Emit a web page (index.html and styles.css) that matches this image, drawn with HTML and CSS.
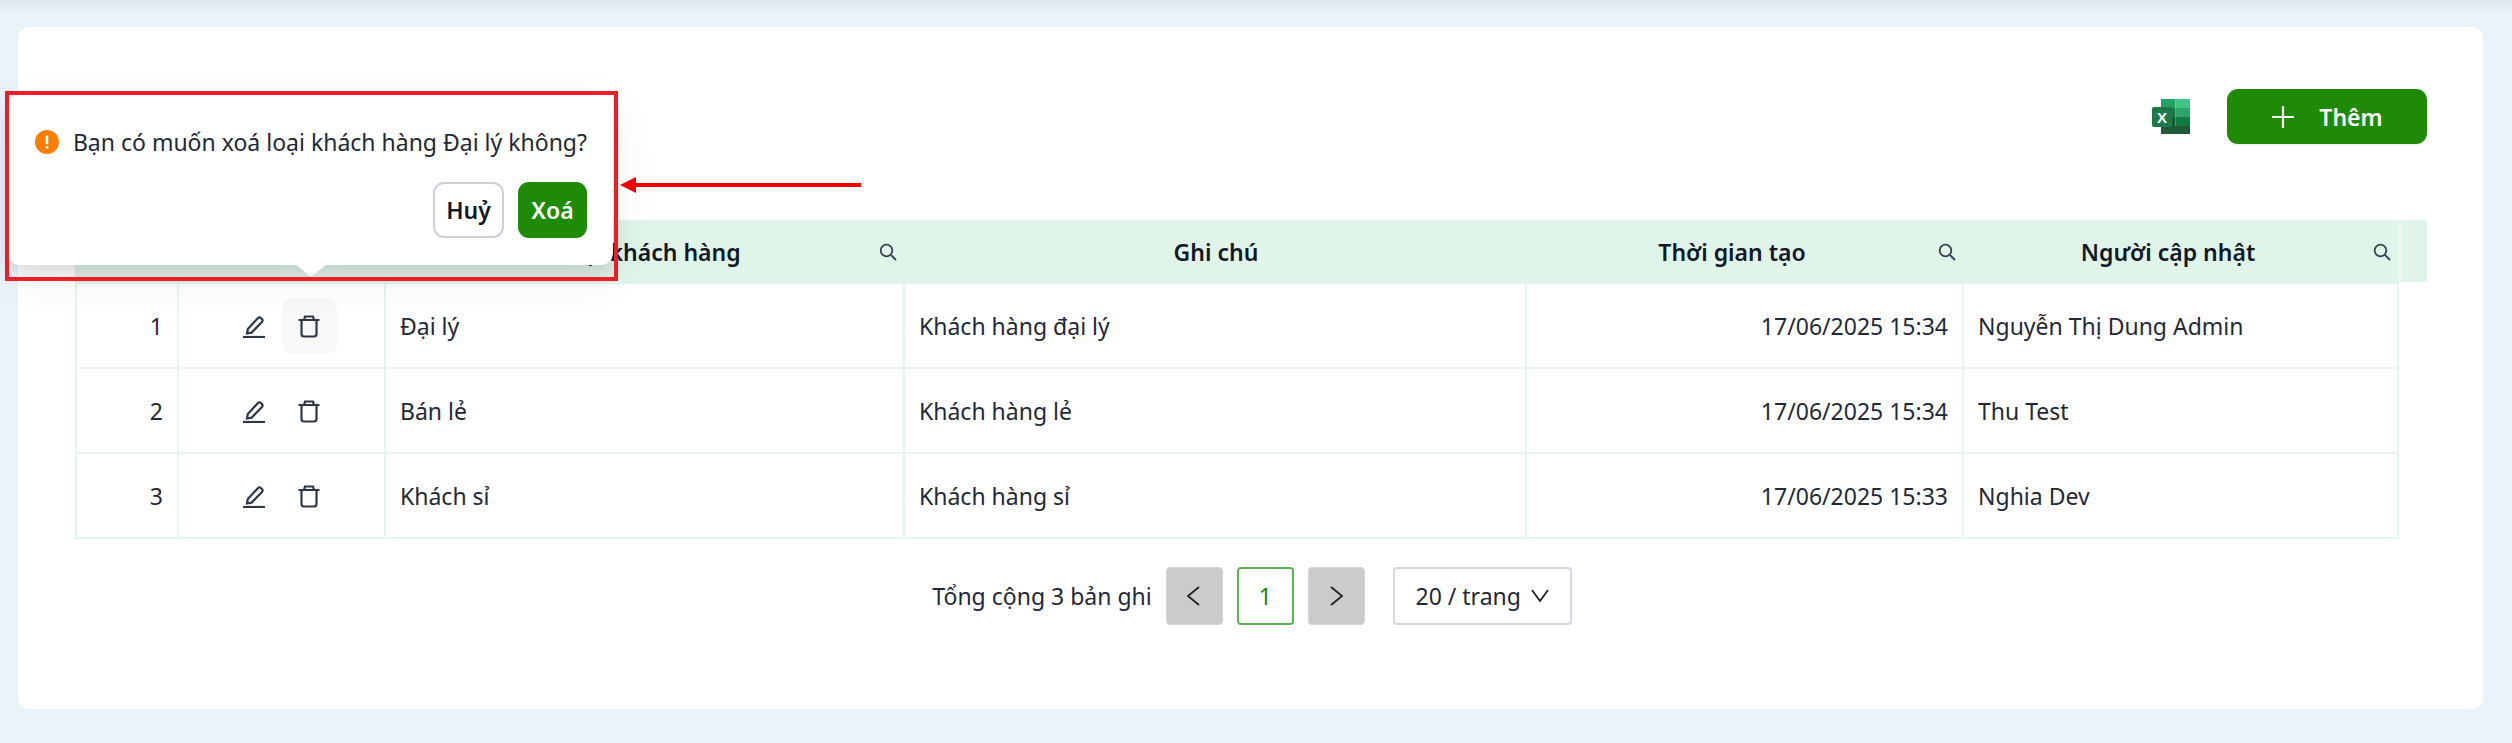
FILE: index.html
```html
<!DOCTYPE html>
<html lang="vi">
<head>
<meta charset="utf-8">
<title>Loại khách hàng</title>
<link rel="stylesheet" href="styles.css">
</head>
<body>
<div class="card">
  <div class="toolbar">
    <h1 class="title">Loại khách hàng</h1>
    <div class="actions">
      <svg class="excel" viewBox="0 0 38 35" width="38" height="35">
        <rect x="9" y="0" width="14.500" height="9" fill="#21a366"/>
        <rect x="23.500" y="0" width="14.500" height="9" fill="#3fc486"/>
        <rect x="9" y="9" width="14.500" height="9" fill="#107c41"/>
        <rect x="23.500" y="9" width="14.500" height="9" fill="#2fa36c"/>
        <rect x="9" y="18" width="14.500" height="9" fill="#185c37"/>
        <rect x="23.500" y="18" width="14.500" height="9" fill="#107c41"/>
        <rect x="9" y="27" width="29" height="8" fill="#1f5a3a"/>
        <rect x="0" y="8" width="20" height="20" rx="2" fill="#1d7a48"/>
        <text class="excel-x" x="10" y="23.500" text-anchor="middle">X</text>
      </svg>
      <button class="btn btn-add">
        <svg viewBox="0 0 24 24" width="24" height="24"><path d="M12 1v22M1 12h22" stroke="#fff" stroke-width="2.200" fill="none"/></svg>
        <span>Thêm</span>
      </button>
    </div>
  </div>

  <div class="table">
    <div class="row head">
      <div class="cell c-stt"></div>
      <div class="cell c-act"></div>
      <div class="cell c-name"><span class="th">Tên loại khách hàng</span><svg class="search" viewBox="0 0 20 20"><circle cx="8.500" cy="8.500" r="5.800"/><path d="M13 13l5 5"/></svg></div>
      <div class="cell c-note"><span class="th">Ghi chú</span></div>
      <div class="cell c-time"><span class="th">Thời gian tạo</span><svg class="search" viewBox="0 0 20 20"><circle cx="8.500" cy="8.500" r="5.800"/><path d="M13 13l5 5"/></svg></div>
      <div class="cell c-user"><span class="th">Người cập nhật</span><svg class="search" viewBox="0 0 20 20"><circle cx="8.500" cy="8.500" r="5.800"/><path d="M13 13l5 5"/></svg></div>
      <div class="cell c-scroll"></div>
    </div>

    <div class="row body">
      <div class="cell c-stt num">1</div>
      <div class="cell c-act">
        <span class="icon-btn"><svg viewBox="0 0 24 24"><path d="M5 19.500l.8-4.500L16 4a2 2 0 0 1 2.900 0l1.100 1.100a2 2 0 0 1 0 2.900L9.500 18.700z"/><path d="M1 23h22"/></svg></span>
        <span class="icon-btn active"><svg viewBox="0 0 24 24"><path d="M1.500 6h21M7 6l1-3.500h8L17 6M4.500 6v14a2.500 2.500 0 0 0 2.500 2.500h10a2.500 2.500 0 0 0 2.500-2.500V6"/></svg></span>
      </div>
      <div class="cell c-name">Đại lý</div>
      <div class="cell c-note">Khách hàng đại lý</div>
      <div class="cell c-time right">17/06/2025 15:34</div>
      <div class="cell c-user">Nguyễn Thị Dung Admin</div>
    </div>
    <div class="row body">
      <div class="cell c-stt num">2</div>
      <div class="cell c-act">
        <span class="icon-btn"><svg viewBox="0 0 24 24"><path d="M5 19.500l.8-4.500L16 4a2 2 0 0 1 2.900 0l1.100 1.100a2 2 0 0 1 0 2.900L9.500 18.700z"/><path d="M1 23h22"/></svg></span>
        <span class="icon-btn"><svg viewBox="0 0 24 24"><path d="M1.500 6h21M7 6l1-3.500h8L17 6M4.500 6v14a2.500 2.500 0 0 0 2.500 2.500h10a2.500 2.500 0 0 0 2.500-2.500V6"/></svg></span>
      </div>
      <div class="cell c-name">Bán lẻ</div>
      <div class="cell c-note">Khách hàng lẻ</div>
      <div class="cell c-time right">17/06/2025 15:34</div>
      <div class="cell c-user">Thu Test</div>
    </div>
    <div class="row body">
      <div class="cell c-stt num">3</div>
      <div class="cell c-act">
        <span class="icon-btn"><svg viewBox="0 0 24 24"><path d="M5 19.500l.8-4.500L16 4a2 2 0 0 1 2.900 0l1.100 1.100a2 2 0 0 1 0 2.900L9.500 18.700z"/><path d="M1 23h22"/></svg></span>
        <span class="icon-btn"><svg viewBox="0 0 24 24"><path d="M1.500 6h21M7 6l1-3.500h8L17 6M4.500 6v14a2.500 2.500 0 0 0 2.500 2.500h10a2.500 2.500 0 0 0 2.500-2.500V6"/></svg></span>
      </div>
      <div class="cell c-name">Khách sỉ</div>
      <div class="cell c-note">Khách hàng sỉ</div>
      <div class="cell c-time right">17/06/2025 15:33</div>
      <div class="cell c-user">Nghia Dev</div>
    </div>
  </div>

  <div class="pager">
    <span class="total">Tổng cộng 3 bản ghi</span>
    <span class="page nav"><svg viewBox="0 0 20 20" width="20" height="20"><path d="M15 1L4 10l11 9"/></svg></span>
    <span class="page current">1</span>
    <span class="page nav"><svg viewBox="0 0 20 20" width="20" height="20"><path d="M5 1l11 9-11 9"/></svg></span>
    <span class="size">20 / trang <svg viewBox="0 0 18 18" width="18" height="18"><path d="M1 3l8 11 8-11"/></svg></span>
  </div>
</div>

<div class="popup">
  <div class="pop-msg">
    <svg class="warn" viewBox="0 0 24 24" width="24" height="24"><circle cx="12" cy="12" r="12" fill="#fa7d00"/><rect x="10.700" y="5.500" width="2.600" height="9" rx="1.200" fill="#fff"/><circle cx="12" cy="17.500" r="1.500" fill="#fff"/></svg>
    <span>Bạn có muốn xoá loại khách hàng Đại lý không?</span>
  </div>
  <div class="pop-actions">
    <button class="btn btn-cancel">Huỷ</button>
    <button class="btn btn-ok">Xoá</button>
  </div>
  <span class="pop-tip"></span>
</div>
<div class="redbox"></div>
<svg class="arrow" viewBox="0 0 244 20" width="244" height="20"><path d="M241 10H14" stroke="#f40000" stroke-width="4"/><path d="M0 10l16-8v16z" fill="#f40000"/></svg>
</body>
</html>
```
FILE: styles.css
```css
* { box-sizing: border-box; }
html, body { margin: 0; height: 743px; overflow: hidden; }
body {
  background: linear-gradient(#dfe6ec 0, #eaf2fa 12px) no-repeat #eaf2fa;
  font-family: "Noto Sans", "Open Sans", sans-serif;
  font-size: 23px;
  color: #1f2937;
  padding: 27px 29px 34px 18px;
  position: relative;
}
.card {
  background: #fff;
  border-radius: 12px;
  height: 682px;
  padding: 62px 56px 0 57px;
}
.toolbar { display: flex; justify-content: space-between; align-items: center; height: 55px; margin-bottom: 76px; }
.title { margin: 0 0 23px; font-size: 38px; font-weight: 700; color: #111827; }
.actions { display: flex; align-items: center; gap: 37px; }
.excel { display: block; }
.excel-x { font-family: "Liberation Sans", sans-serif; font-weight: 700; font-size: 15px; fill: #fff; }
.btn { font-family: inherit; border-radius: 11px; cursor: pointer; font-weight: 600; font-size: 23px; }
.btn-add {
  width: 200px; height: 55px; background: #1e8a05; border: 0; color: #fff;
  display: flex; align-items: center; justify-content: center; gap: 24px;
  box-shadow: 0 2px 2px rgba(0,0,0,.06);
}
.table { width: 2352px; }
.row { display: flex; }
.head { height: 64px; font-weight: 600; }
.body { height: 85px; }
.cell { display: flex; align-items: center; padding: 0 14px; border-right: 2px solid #e7f5f0; border-bottom: 2px solid #e7f5f0; }
.body .cell:first-child { border-left: 2px solid #e7f5f0; }
.head .cell { border: 0; padding: 0 7px 0 0; background: #e0f4e9; }
.head .c-note { padding: 0; }
.c-stt { width: 104px; }
.c-act { width: 207px; justify-content: center; padding: 0; }
.c-name { width: 519px; }
.c-note { width: 622px; }
.c-time { width: 437px; }
.c-user { width: 435px; }
.head .c-scroll { width: 28px; height: 62px; border-left: 2px solid #eef7f4; }
.num { justify-content: flex-end; }
.right { justify-content: flex-end; }
.th { flex: 1; text-align: center; color: #111827; }
.search { width: 20px; height: 20px; fill: none; stroke: #374151; stroke-width: 1.800; flex: none; }
.c-name .search { margin-left: 6px; }
.icon-btn { width: 55px; height: 56px; display: flex; align-items: center; justify-content: center; border-radius: 10px; }
.icon-btn svg { width: 24px; height: 24px; fill: none; stroke: #2f3744; stroke-width: 2.200; }
.icon-btn.active { background: #f8f8f8; }
.pager { display: flex; align-items: center; justify-content: center; margin-top: 28px; height: 58px; padding-left: 2px; }
.total { margin-right: 14px; }
.page { width: 57px; height: 58px; border-radius: 4px; display: flex; align-items: center; justify-content: center; margin-right: 14px; }
.page svg, .size svg { fill: none; stroke: #222; stroke-width: 1.800; }
.nav { background: #cbcbcb; border: 1px solid #d6d6d6; }
.current { border: 2px solid #5cb455; color: #1e8a05; background: #fff; }
.size { margin-left: 14px; width: 179px; height: 58px; border: 2px solid #d8d8e0; border-radius: 4px; display: flex; align-items: center; justify-content: center; gap: 10px; }
.popup {
  position: absolute; left: 8px; top: 95px; width: 605px; height: 170px;
  background: #fff; border-radius: 12px; padding: 31px 26px 0 27px;
  box-shadow: 0 8px 16px rgba(0,0,0,.1), 0 12px 48px rgba(0,0,0,.07);
}
.pop-msg { display: flex; align-items: center; gap: 14px; white-space: nowrap; }
.pop-actions { display: flex; justify-content: flex-end; gap: 14px; margin-top: 24px; }
.btn-cancel { width: 71px; height: 56px; padding: 0; background: #fff; border: 2px solid #cfcfd8; color: #111827; }
.btn-ok { width: 69px; height: 56px; padding: 0; background: #1e8a05; border: 0; color: #fff; }
.pop-tip { position: absolute; left: 287px; top: 169px; width: 32px; height: 13px; background: #fff; clip-path: polygon(0 0, 100% 0, 50% 100%); }
.redbox { position: absolute; left: 5px; top: 91px; width: 613px; height: 190px; border: 4px solid #ee1c25; pointer-events: none; }
.arrow { position: absolute; left: 620px; top: 175px; }
```
